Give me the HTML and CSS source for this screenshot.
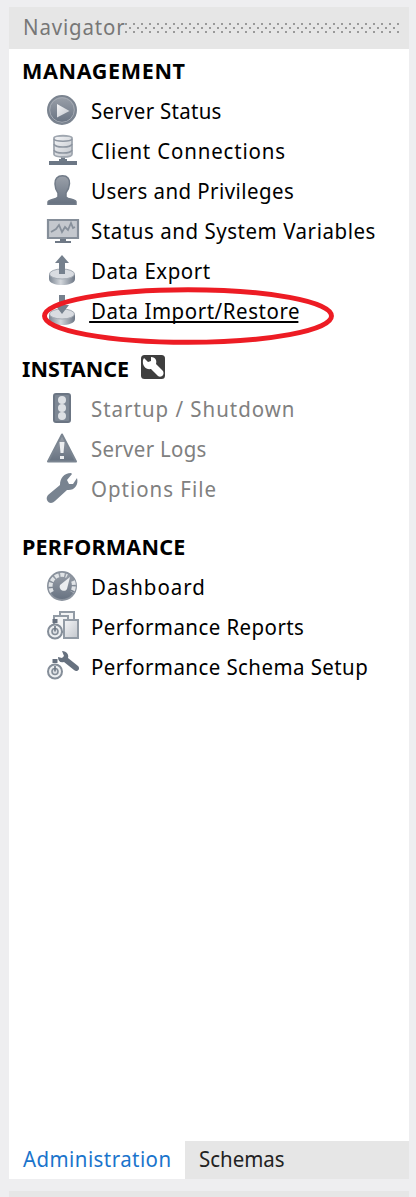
FILE: index.html
```html
<!DOCTYPE html>
<html lang="en">
<head>
<meta charset="utf-8">
<title>Navigator</title>
<link rel="stylesheet" href="styles.css">
</head>
<body>
<svg class="defs" width="0" height="0" aria-hidden="true">
  <defs>
    <linearGradient id="steel" x1="0" y1="0" x2="0" y2="1"><stop offset="0" stop-color="#9ba1aa"/><stop offset="1" stop-color="#667180"/></linearGradient>
    <linearGradient id="silver" x1="0" y1="0" x2="1" y2="1"><stop offset="0" stop-color="#f4f5f7"/><stop offset="1" stop-color="#c3c7cd"/></linearGradient>
    <linearGradient id="disk" x1="0" y1="0" x2="1" y2="0"><stop offset="0" stop-color="#7b8592"/><stop offset=".45" stop-color="#d3d7dc"/><stop offset="1" stop-color="#6d7785"/></linearGradient>
    <symbol id="stopwatch" viewBox="0 0 18 22" overflow="visible"><path d="M6 0h5v4H6z" fill="#66707e"/><circle cx="8.500" cy="12.500" r="7" fill="#edeff1" stroke="#858e99" stroke-width="2"/><circle cx="8.500" cy="12.500" r="3" fill="#dde0e4" stroke="#858e99" stroke-width="1.600"/><path d="M8.500 12.500V7" stroke="#66707e" stroke-width="1.500"/></symbol>
  </defs>
</svg>
<main class="panel">
  <header class="titlebar"><span class="title"><span class="label wide">Navigator</span></span><span class="grip"></span></header>
  <div class="content">
    <section class="group">
      <h2 class="heading"><span class="label management">MANAGEMENT</span></h2>
      <a class="row"><svg class="icon" viewBox="0 0 32 32"><circle cx="16" cy="15" r="14" fill="url(#steel)" stroke="#7b8490" stroke-width="2"/><circle cx="16" cy="15" r="12.300" fill="none" stroke="#a5abb4"/><path d="M11 9v13.500L23.500 16z" fill="url(#silver)"/></svg><span class="label tight">Server Status</span></a>
      <a class="row"><svg class="icon" viewBox="0 0 32 32"><path d="M15 20h4v4h2v6h-8v-6h2z" fill="#707b88"/><path d="M3 26h28v4H3z" fill="#6c7785"/><path d="M8 3c0-3 18-3 18 0v16c0 4-18 4-18 0z" fill="url(#silver)" stroke="#a0a7b0" stroke-width="1.800"/><path d="M8 4c1 3 17 3 18 0M8 9c1 4 17 4 18 0M8 15c1 4 17 4 18 0" fill="none" stroke="#8e96a1" stroke-width="1.600"/></svg><span class="label wide">Client Connections</span></a>
      <a class="row"><svg class="icon" viewBox="0 0 32 32"><path d="M16.500.8c5 0 7.400 3.200 7 8-.2 4-2 7-3.500 9v4c2 3 10 2 10 5v2.500H2V27c0-3 8-2 10-5v-4C10.500 16 9 13 9 9 8.500 4 11.500.8 16.500.8z" fill="url(#steel)" stroke="#717b88" stroke-width="1.500"/></svg><span class="label snug">Users and Privileges</span></a>
      <a class="row"><svg class="icon" viewBox="0 0 32 32"><path d="M2 5h30v18H2z" fill="#c4c8ce" stroke="#858e99" stroke-width="2.200"/><path d="M5 17l5-3 3-4 3 7 3-5 3 3 3-7 2 5 2-1" fill="none" stroke="#87909b" stroke-width="1.800"/><path d="M14 24h6v2h5v2H9v-2h5z" fill="#6f7986"/></svg><span class="label medium">Status and System Variables</span></a>
      <a class="row"><svg class="icon" viewBox="0 0 32 32"><path d="M3 19v5c0 8 26 8 26 0v-5z" fill="url(#disk)"/><ellipse cx="16" cy="19" rx="12.500" ry="5" fill="#d9dce1" stroke="#a3aab3"/><path d="M16 0l7 8h-4v11h-6V8H9z" fill="#75808d"/></svg><span class="label medium">Data Export</span></a>
      <a class="row current"><svg class="icon" viewBox="0 0 32 32"><path d="M3 19v5c0 8 26 8 26 0v-5z" fill="url(#disk)"/><ellipse cx="16" cy="19" rx="12.500" ry="5" fill="#d9dce1" stroke="#a3aab3"/><path d="M13 0h6v10h4l-7 9-7-9h4z" fill="#75808d"/></svg><span class="label medium">Data Import/Restore</span><svg class="marker" viewBox="0 0 292 58"><ellipse cx="146" cy="29" rx="143.500" ry="26.300" fill="none" stroke="#ed1c24" stroke-width="4.900"/></svg></a>
    </section>
    <section class="group">
      <h2 class="heading"><span class="label instance">INSTANCE</span><svg class="badge" viewBox="0 0 24 24"><rect width="24" height="24" rx="3.500" fill="#3e3e3e"/><path d="M3 3l4 4 3-1V2c5 0 6 4 5 7l7 7c2 4-2 7-5 5l-7-7C5 15 1 11 2 5z" fill="#fff"/></svg></h2>
      <a class="row off"><svg class="icon" viewBox="0 0 32 32"><rect x="8" y="1" width="16" height="28" rx="2" fill="#7d8794" stroke="#6b7583" stroke-width="2"/><g fill="#dde0e4"><circle cx="16" cy="7" r="4"/><circle cx="16" cy="15" r="4"/><circle cx="16" cy="23" r="4"/></g></svg><span class="label wider">Startup / Shutdown</span></a>
      <a class="row off"><svg class="icon" viewBox="0 0 32 32"><path d="M16 1.500 30 28.500H2z" fill="url(#steel)" stroke="#7b8591" stroke-width="2" stroke-linejoin="round"/><path d="M13.500 9h5l-1 11h-3zM14 23h4v3h-4z" fill="#eceef0"/></svg><span class="label tight">Server Logs</span></a>
      <a class="row off"><svg class="icon" viewBox="0 0 32 32"><path d="M2 22 14 12C14 5 18 0 25 0l1 1-5 6 2 4h4l4-6c2 7-3 13-10 12L9 28c-5 5-11-1-7-6z" fill="#788390"/></svg><span class="label wider">Options File</span></a>
    </section>
    <section class="group">
      <h2 class="heading"><span class="label performance">PERFORMANCE</span></h2>
      <a class="row"><svg class="icon" viewBox="0 0 32 32"><circle cx="16" cy="15" r="14" fill="url(#steel)" stroke="#8a929d" stroke-width="2"/><path d="M6 21A11.500 11.500 0 0 1 21 5M27 10a12 12 0 0 1-1 11" fill="none" stroke="#e1e4e7" stroke-width="4" stroke-dasharray="4 1.500"/><path d="M24 6 21 18c-2 4-9 1-7-4z" fill="#eceef0"/></svg><span class="label wider">Dashboard</span></a>
      <a class="row"><svg class="icon" viewBox="0 0 32 32"><g fill="#f3f4f5" stroke="#929ba5" stroke-width="2"><path d="M14 1h14v20H14z"/><path d="M8 5h14v16H8z"/><path d="M18 9h14v18H18z" fill="url(#silver)"/></g><use href="#stopwatch" x=".5" y="8" width="18" height="22"/></svg><span class="label snug">Performance Reports</span></a>
      <a class="row"><svg class="icon" viewBox="0 0 32 32"><path d="M16 0c5 0 7 4 6 7l10 8c3 3-1 7-4 4L18 11c-4 1-6-1-6-5l4 1 2-2z" fill="#66717f"/><use href="#stopwatch" x=".5" y="8" width="18" height="22"/></svg><span class="label snug">Performance Schema Setup</span></a>
    </section>
  </div>
  <nav class="tabs"><a class="tab active"><span class="label snug">Administration</span></a><a class="tab"><span class="label">Schemas</span></a></nav>
</main>
<div class="next-panel"></div>
</body>
</html>
```
FILE: styles.css
```css
* { box-sizing: border-box; }
body { margin: 0; height: 1197px; padding: 7px 7px 0 9px; display: flex; flex-direction: column; gap: 12px; overflow: hidden; background: #eeeef0; color: #000; font: 22px/40px "Noto Sans", sans-serif; }
.defs { position: absolute; }
.panel { height: 1172px; flex: none; display: flex; flex-direction: column; background: #fff; }
.titlebar { height: 42px; flex: none; padding: 0 10px 0 14px; display: flex; align-items: center; background: #e6e6e6; color: #777; }
.title { width: 102px; padding-bottom: 2px; }
.grip {
  --dot: conic-gradient(from 270deg at 2px 2px, #999 90deg, transparent 0);
  flex: 1; height: 10px;
  background: var(--dot) 0 0 / 8px 8px, var(--dot) 4px 4px / 8px 8px;
}
.content { flex: 1; padding-top: 2px; display: flex; flex-direction: column; gap: 18px; }
.label { display: inline-block; white-space: nowrap; transform-origin: 0 50%; transform: translateY(-1px) scaleX(.93); }
.heading { margin: 0; height: 40px; padding-left: 13px; display: flex; align-items: center; font-size: 22px; font-weight: 700; }
.heading .label { transform: translateY(-1px) scaleX(.98); }
.tight { letter-spacing: .32px; }
.snug { letter-spacing: .47px; }
.medium { letter-spacing: .6px; }
.wide { letter-spacing: .9px; }
.wider { letter-spacing: 1.07px; }
.management { letter-spacing: .65px; }
.instance { width: 119px; }
.performance { letter-spacing: .2px; }
.row { position: relative; height: 40px; padding-left: 37px; display: flex; align-items: center; gap: 13px; }
.icon { width: 32px; height: 32px; flex: none; overflow: visible; }
.badge { width: 24px; height: 24px; margin-top: -4px; }
.off { color: #808080; }
.current .label::after { content: ""; position: absolute; left: -2px; top: 31px; width: 225px; height: 2px; background: #000; }
.marker { position: absolute; left: 33px; top: -4px; width: 292px; height: 58px; }
.tabs { height: 38px; flex: none; display: flex; background: #e6e6e6; }
.tab { padding: 0 14px 2px; display: flex; align-items: center; color: #222; }
.active { width: 176px; background: #fff; color: #1a74cc; }
.next-panel { height: 6px; flex: none; background: #e6e6e6; }
```
